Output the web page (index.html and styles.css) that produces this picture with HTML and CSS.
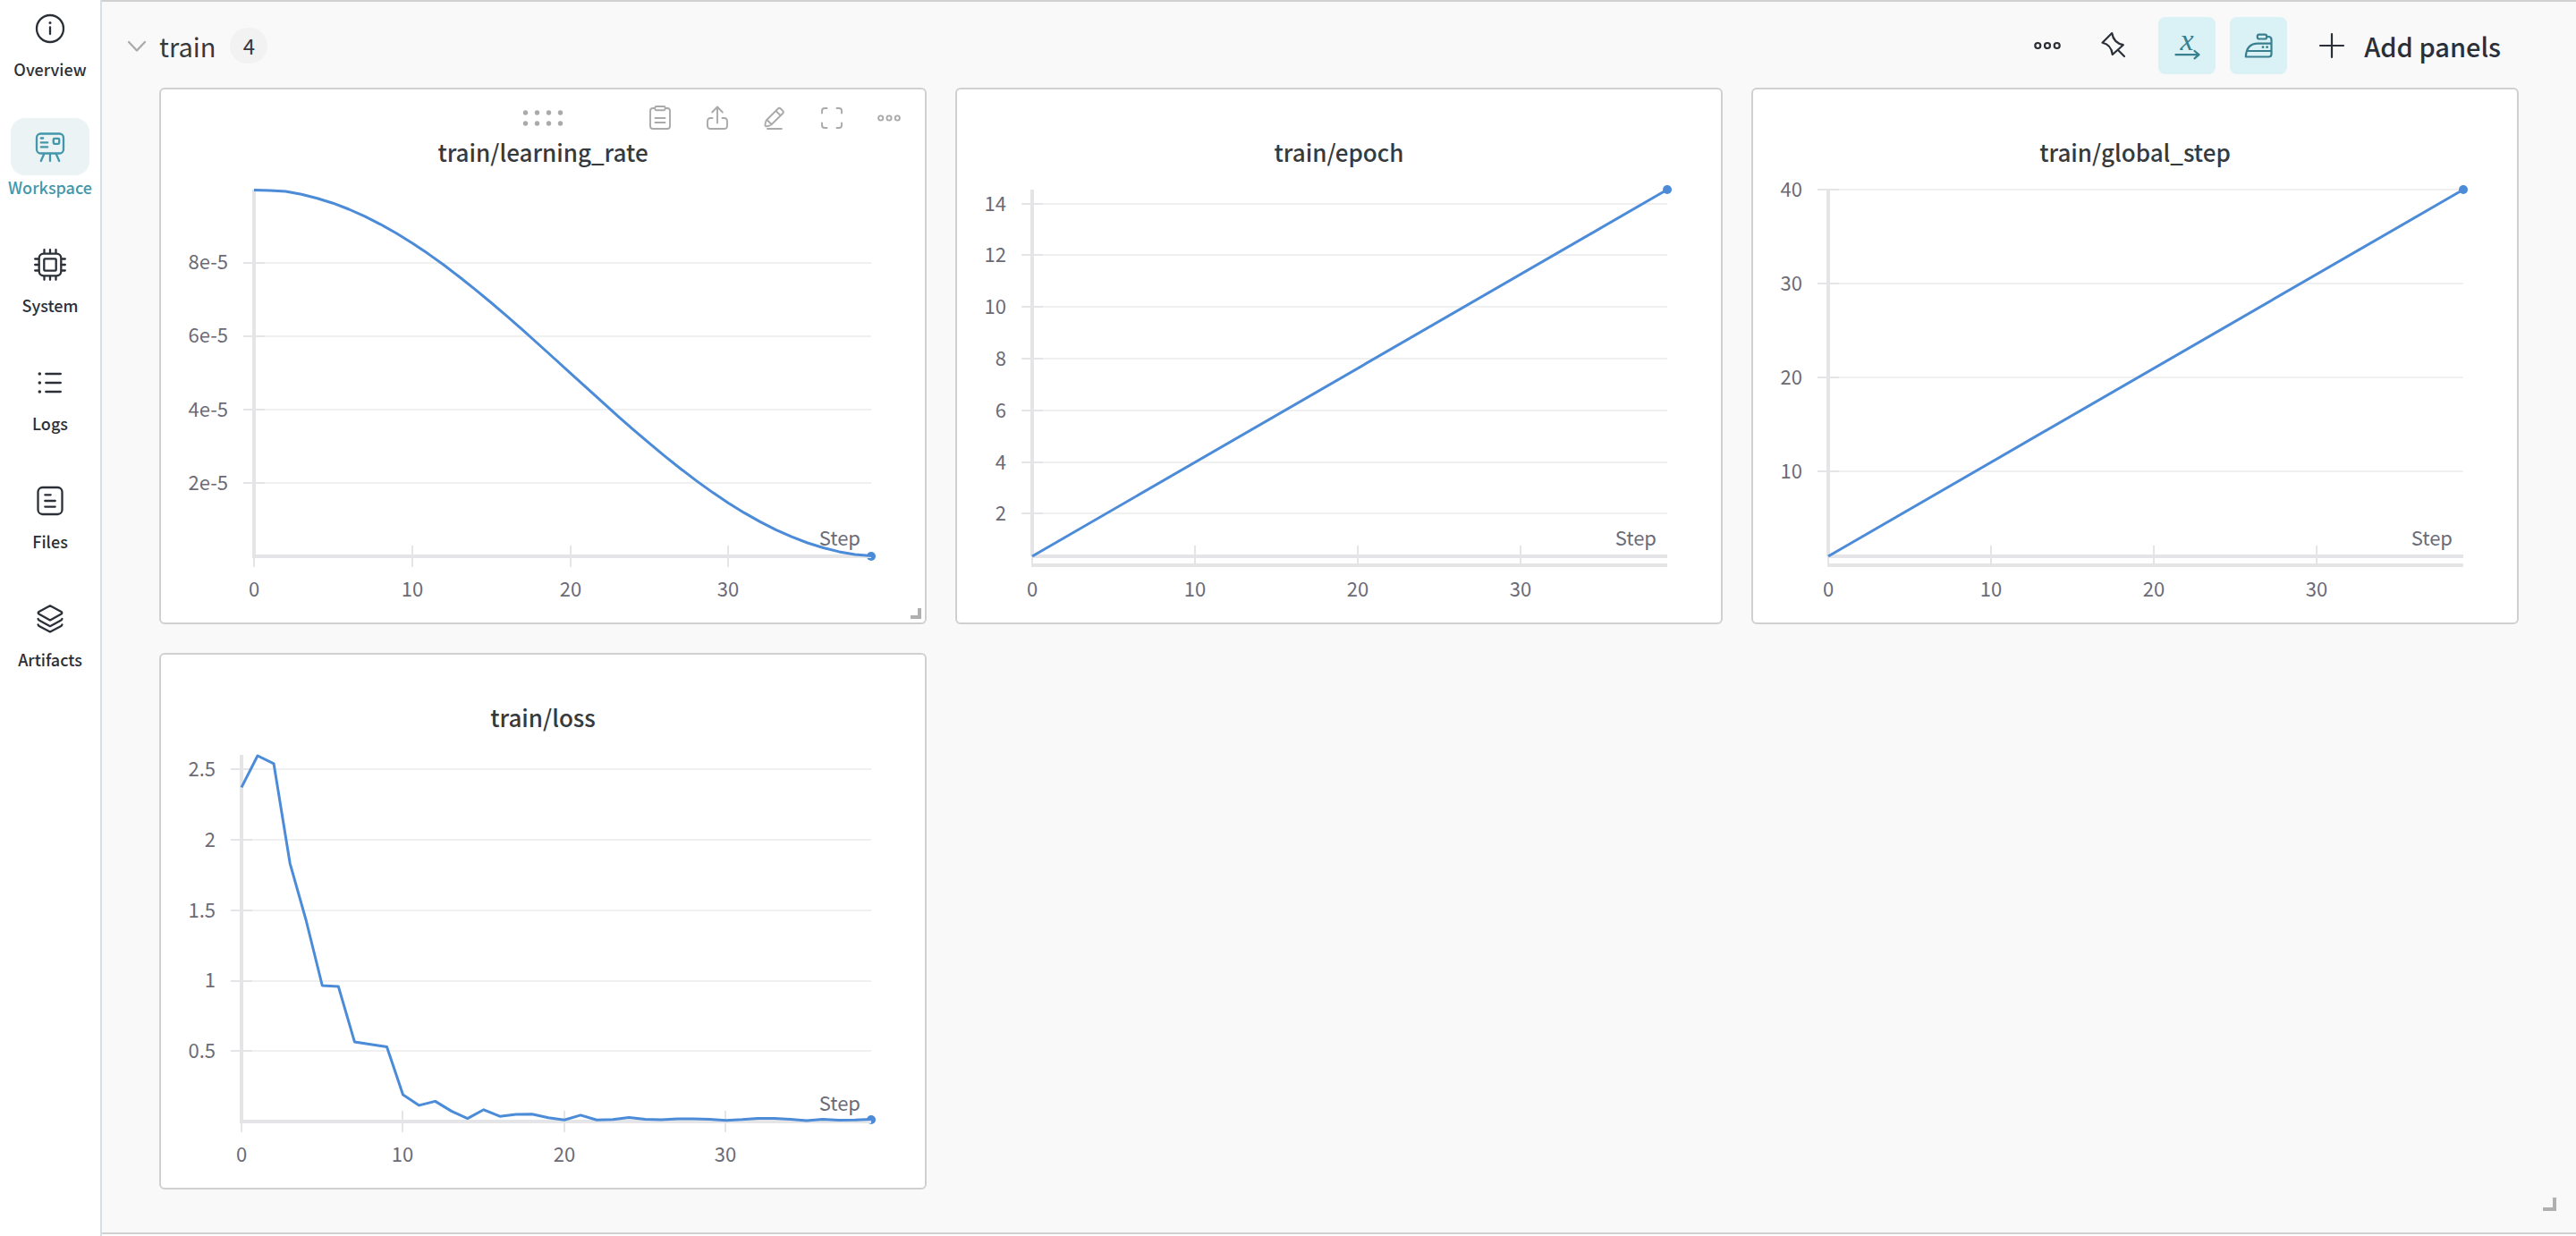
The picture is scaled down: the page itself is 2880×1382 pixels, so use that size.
FILE: index.html
```html
<!DOCTYPE html>
<html lang="en">
<head>
<meta charset="utf-8">
<title>Workspace</title>
<link rel="stylesheet" href="styles.css">
</head>
<body>
<div class="app">
  <nav class="sidebar">
    <a class="nav-item" href="#overview">
      <span class="nav-icon"><svg class="icon-nav" viewBox="0 0 36 36"><circle cx="18" cy="18" r="15"/><path d="M18 16.5V24"/><circle class="solid" cx="18" cy="11.5" r="1.5"/></svg></span>
      <span class="nav-label">Overview</span>
    </a>
    <a class="nav-item active" href="#workspace">
      <span class="nav-icon"><svg class="icon-nav" viewBox="0 0 36 36"><rect x="3" y="3.5" width="30" height="22" rx="4.5"/><path d="M7.8 8.5h2.4M7.8 13.4h7.4M7.8 18.4h7.4M11.3 26L7.8 34M18 26v8M24.7 26l3.5 8"/><rect x="21.8" y="8.8" width="6.4" height="6" rx="1"/></svg></span>
      <span class="nav-label">Workspace</span>
    </a>
    <a class="nav-item" href="#system">
      <span class="nav-icon"><svg class="icon-nav" viewBox="0 0 36 36"><rect x="5.7" y="5.7" width="24.6" height="24.6" rx="5"/><rect x="11.3" y="11.3" width="13.4" height="13.4" rx="1"/><path d="M11.5 1.2v4M18 1.2v4M24.5 1.2v4M11.5 30.8v4M18 30.8v4M24.5 30.8v4M1.2 11.5h4M1.2 18h4M1.2 24.5h4M30.8 11.5h4M30.8 18h4M30.8 24.5h4"/></svg></span>
      <span class="nav-label">System</span>
    </a>
    <a class="nav-item" href="#logs">
      <span class="nav-icon"><svg class="icon-nav" viewBox="0 0 36 36"><circle class="solid" cx="6.3" cy="8" r="1.8"/><circle class="solid" cx="6.3" cy="18" r="1.8"/><circle class="solid" cx="6.3" cy="28" r="1.8"/><path d="M13.3 8h16.5M13.3 18h16.5M13.3 28h16.5"/></svg></span>
      <span class="nav-label">Logs</span>
    </a>
    <a class="nav-item" href="#files">
      <span class="nav-icon"><svg class="icon-nav" viewBox="0 0 36 36"><rect x="4.5" y="3" width="27" height="30" rx="5"/><path d="M12.3 11.3h6.4M12.3 18h11.4M12.3 24.6h11.4"/></svg></span>
      <span class="nav-label">Files</span>
    </a>
    <a class="nav-item" href="#artifacts">
      <span class="nav-icon"><svg class="icon-nav" viewBox="0 0 36 36"><path d="M18 3.3L30.5 10q1.6 1.2 0 2.6L18 19.6 5.5 12.6q-1.6-1.3 0-2.6zM4.6 18q0 1 1.5 1.8L18 26.2l11.9-6.4Q31.4 19 31.4 18M4.6 24.5q0 1 1.5 1.8L18 32.6l11.9-6.3q1.5-.8 1.5-1.8"/></svg></span>
      <span class="nav-label">Artifacts</span>
    </a>
  </nav>

  <main class="main">
    <section class="section">
      <header class="section-header">
        <button class="section-toggle" type="button">
          <svg class="chevron" viewBox="0 0 24 24"><path d="M3 8l9 9.5L21 8"/></svg>
          <span class="section-title">train</span>
          <span class="badge">4</span>
        </button>
        <div class="section-actions">
          <div class="plain-actions">
            <button class="icon-button" type="button" aria-label="More"><svg class="icon-action" viewBox="0 0 40 40"><circle cx="9.3" cy="20" r="3"/><circle cx="20" cy="20" r="3"/><circle cx="30.7" cy="20" r="3"/></svg></button>
            <button class="icon-button" type="button" aria-label="Pin"><svg class="icon-action" viewBox="0 0 40 40"><path d="M16.2 6L5.5 16.8Q15.5 19 16.8 30L28.8 19.2Q18 17 16.2 6zM22.8 24.8L30 32"/></svg></button>
          </div>
          <div class="toggle-actions">
            <button class="icon-button on" type="button" aria-label="X axis"><svg class="icon-action" viewBox="0 0 40 40"><text class="axis-glyph" x="20" y="25">x</text><path d="M7.5 30.2H33M28.5 26l5 4.2-5 4.2"/></svg></button>
            <button class="icon-button on" type="button" aria-label="Smoothing"><svg class="icon-action" viewBox="0 0 40 40"><rect x="18.8" y="7.7" width="10.4" height="4.8" rx="2"/><path d="M29.2 10h1.8q3.5 0 3.5 3.5V29.5q0 3-3 3H5.8Q6.5 17.6 19.5 17.6H34.5M8 26H34.5"/><circle class="solid" cx="25" cy="21.7" r="1.4"/><circle class="solid" cx="29.6" cy="21.7" r="1.4"/></svg></button>
          </div>
          <button class="add-button" type="button">
            <svg class="icon-plus" viewBox="0 0 28 28"><path d="M14 1v26M1 14h26"/></svg>
            <span>Add panels</span>
          </button>
        </div>
      </header>

      <div class="panels">
        <article class="panel">
          <div class="panel-head">
            <div class="panel-tools">
              <svg class="drag" viewBox="0 0 48 20"><circle cx="4.5" cy="4" r="2.7"/><circle cx="17.5" cy="4" r="2.7"/><circle cx="30.5" cy="4" r="2.7"/><circle cx="43.5" cy="4" r="2.7"/><circle cx="4.5" cy="16" r="2.7"/><circle cx="17.5" cy="16" r="2.7"/><circle cx="30.5" cy="16" r="2.7"/><circle cx="43.5" cy="16" r="2.7"/></svg>
              <div class="tool-buttons">
                <button class="tool" type="button" aria-label="Copy"><svg class="icon-tool" viewBox="0 0 32 32"><path d="M10 5H8Q5 5 5 8V25q0 3 3 3H24q3 0 3-3V8q0-3-3-3H22M10.5 16h11M10.5 21h11"/><rect x="10.3" y="3" width="11.4" height="4.3" rx="1.5"/></svg></button>
                <button class="tool" type="button" aria-label="Share"><svg class="icon-tool" viewBox="0 0 32 32"><path d="M16 4V21.5M10.2 9.5L16 3.5l5.8 6M10.5 16H8.5Q5 16 5 19.5V24.5Q5 28 8.5 28H23.5Q27 28 27 24.5V19.5Q27 16 23.5 16H21.5"/></svg></button>
                <button class="tool" type="button" aria-label="Edit"><svg class="icon-tool" viewBox="0 0 32 32"><path d="M8 28H23.8M6.8 18.5L19.8 5.5Q21.3 4 22.8 5.5L25.2 7.9Q26.5 9.4 25.2 10.8L12.2 23.5Q10 25 7 25.2 5.3 25.3 5.4 23.5 5.8 20 6.8 18.5zM7.5 18l5 5M17.5 8l5.2 5.2"/></svg></button>
                <button class="tool" type="button" aria-label="Full screen"><svg class="icon-tool" viewBox="0 0 32 32"><path d="M5 10.5V8Q5 5 8 5h2.5M21.5 5H24q3 0 3 3v2.5M27 21.5V24q0 3-3 3H21.5M10.5 27H8q-3 0-3-3V21.5"/></svg></button>
                <button class="tool" type="button" aria-label="More"><svg class="icon-tool" viewBox="0 0 32 32"><circle cx="6.7" cy="16" r="2.6"/><circle cx="16" cy="16" r="2.6"/><circle cx="25.3" cy="16" r="2.6"/></svg></button>
              </div>
            </div>
            <h2 class="panel-title">train/learning_rate</h2>
          </div>
          <svg class="chart" viewBox="0 0 854 496">
            <path class="grid" d="M104 94H794M104 176H794M104 258H794M104 340H794"/>
            <path class="tick" d="M92 94h24M92 176h24M92 258h24M92 340h24M104 422v12M281 410v24M458 410v24M634 410v24"/>
            <circle class="dot" cx="794" cy="422" r="5"/>
            <path class="axis" d="M104 12V422M102 422H794"/>
            <polyline class="line" points="104,12.6 121.7,13 139.4,14.1 157,17.3 174.7,21.7 192.4,27.2 210.1,34 227.8,41.9 245.4,50.8 263.1,60.8 280.8,71.8 298.5,83.6 316.2,96.3 333.8,109.7 351.5,123.8 369.2,138.5 386.9,153.6 404.6,169.1 422.2,185 439.9,201 457.6,217.1 475.3,233.2 493,249.2 510.6,265.1 528.3,280.6 546,295.7 563.7,310.4 581.4,324.5 599,337.9 616.7,350.6 634.4,362.4 652.1,373.4 669.8,383.4 687.4,392.3 705.1,400.2 722.8,407 740.5,412.5 758.2,416.9 775.8,420.1 794,421.5"/>
            <g class="y-labels"><text x="75" y="101">8e-5</text><text x="75" y="183">6e-5</text><text x="75" y="266">4e-5</text><text x="75" y="348">2e-5</text><text x="782" y="410">Step</text></g>
            <g class="x-labels"><text x="104" y="467">0</text><text x="281" y="467">10</text><text x="458" y="467">20</text><text x="634" y="467">30</text></g>
          </svg>
          <span class="resize"></span>
        </article>

        <article class="panel">
          <div class="panel-head"><h2 class="panel-title">train/epoch</h2></div>
          <svg class="chart" viewBox="0 0 854 496">
            <path class="grid" d="M84 28H794M84 85H794M84 143H794M84 201H794M84 259H794M84 317H794M84 374H794"/>
            <path class="tick" d="M72 28h24M72 85h24M72 143h24M72 201h24M72 259h24M72 317h24M72 374h24M84 422v10M266 410v22M448 410v22M630 410v22"/>
            <circle class="dot" cx="794" cy="12" r="5"/>
            <path class="axis" d="M84 12V422M84 422H794M83 432H794"/>
            <path class="line" d="M84 422L794 12"/>
            <g class="y-labels"><text x="55" y="36">14</text><text x="55" y="93">12</text><text x="55" y="151">10</text><text x="55" y="209">8</text><text x="55" y="267">6</text><text x="55" y="325">4</text><text x="55" y="382">2</text><text x="782" y="410">Step</text></g>
            <g class="x-labels"><text x="84" y="467">0</text><text x="266" y="467">10</text><text x="448" y="467">20</text><text x="630" y="467">30</text></g>
          </svg>
        </article>

        <article class="panel">
          <div class="panel-head"><h2 class="panel-title">train/global_step</h2></div>
          <svg class="chart" viewBox="0 0 854 496">
            <path class="grid" d="M84 12H794M84 117H794M84 222H794M84 327H794"/>
            <path class="tick" d="M72 12h24M72 117h24M72 222h24M72 327h24M84 422v10M266 410v22M448 410v22M630 410v22"/>
            <circle class="dot" cx="794" cy="12" r="5"/>
            <path class="axis" d="M84 12V422M84 422H794M83 432H794"/>
            <path class="line" d="M84 422L794 12"/>
            <g class="y-labels"><text x="55" y="20">40</text><text x="55" y="125">30</text><text x="55" y="230">20</text><text x="55" y="335">10</text><text x="782" y="410">Step</text></g>
            <g class="x-labels"><text x="84" y="467">0</text><text x="266" y="467">10</text><text x="448" y="467">20</text><text x="630" y="467">30</text></g>
          </svg>
        </article>

        <article class="panel">
          <div class="panel-head"><h2 class="panel-title">train/loss</h2></div>
          <svg class="chart" viewBox="0 0 854 496">
            <path class="grid" d="M90 28H794M90 107H794M90 186H794M90 265H794M90 343H794"/>
            <path class="tick" d="M78 28h24M78 107h24M78 186h24M78 265h24M78 343h24M90 422v12M270 410v24M451 410v24M631 410v24"/>
            <circle class="dot" cx="794" cy="420" r="5"/>
            <path class="axis" d="M90 12V422M88 422H794"/>
            <polyline class="line" points="90,48.4 108,13 126.1,21.9 144.2,133.3 162.2,197 180.3,270 198.3,270.9 216.4,332.9 234.4,335.8 252.5,338.6 270.5,392.1 288.6,403.9 306.6,399.4 324.7,410.4 342.7,418.6 360.8,408.8 378.8,416.2 396.9,414.1 414.9,413.7 433,417.8 451,420.2 469.1,414.9 487.1,420.2 505.2,419.8 523.2,417.4 541.3,419.4 559.3,420 577.4,419 595.4,419 613.5,419.4 631.5,420.7 649.6,419.8 667.6,418.4 685.7,418.6 703.7,419.6 721.8,420.9 739.8,419.6 757.9,420.4 775.9,420.2 794,419.4"/>
            <g class="y-labels"><text x="61" y="36">2.5</text><text x="61" y="115">2</text><text x="61" y="194">1.5</text><text x="61" y="272">1</text><text x="61" y="351">0.5</text><text x="782" y="410">Step</text></g>
            <g class="x-labels"><text x="90" y="467">0</text><text x="270" y="467">10</text><text x="451" y="467">20</text><text x="631" y="467">30</text></g>
          </svg>
        </article>
      </div>
      <span class="resize resize-section"></span>
    </section>
  </main>
</div>
</body>
</html>
```
FILE: styles.css
```css
* {
  box-sizing: border-box;
}

body {
  margin: 0;
  background: #fff;
  color: #2b3038;
  font-family: "Noto Sans CJK SC", "Noto Sans", sans-serif;
}

button {
  margin: 0;
  padding: 0;
  border: 0;
  background: none;
  color: inherit;
  font: inherit;
}

svg {
  display: block;
  overflow: visible;
  fill: none;
  stroke: currentColor;
  stroke-linecap: round;
  stroke-linejoin: round;
}

.solid {
  fill: currentColor;
  stroke: none;
}

.app {
  display: flex;
  min-height: 100vh;
}

/* Sidebar */
.sidebar {
  display: flex;
  flex-direction: column;
  flex: none;
  width: 114px;
  border-right: 2px solid #d8dee3;
}

.nav-item {
  display: flex;
  flex-direction: column;
  align-items: center;
  height: 132px;
  color: #2b3038;
  text-decoration: none;
}

.nav-icon {
  display: flex;
  align-items: center;
  justify-content: center;
  width: 88px;
  height: 64px;
  border-radius: 16px;
}

.icon-nav {
  width: 36px;
  height: 36px;
  stroke-width: 2.3;
}

.nav-label {
  font-size: 18px;
  font-weight: 500;
  line-height: 26px;
}

.nav-item.active {
  color: #4397aa;
}

.nav-item.active .nav-icon {
  background: #ebf3f5;
}

/* Section */
.main {
  flex: 1;
  min-width: 0;
}

.section {
  position: relative;
  padding: 0 64px 48px;
  border-top: 2px solid #d0d0d0;
  border-bottom: 2px solid #d0d0d0;
  background: #f9f9f9;
}

.section-header {
  display: flex;
  align-items: center;
  justify-content: space-between;
  height: 96px;
  padding-top: 2px;
  margin-left: -37px;
}

.section-toggle {
  display: flex;
  align-items: center;
}

.chevron {
  width: 24px;
  height: 24px;
  margin-right: 13px;
  color: #aaa;
  stroke-width: 2.3;
}

.section-title {
  margin-right: 16px;
  color: #363a3d;
  font-size: 29px;
  line-height: 40px;
}

.badge {
  width: 42px;
  border-radius: 20px;
  background: #f2f2f2;
  color: #363a3d;
  font-size: 24px;
  line-height: 40px;
  text-align: center;
}

.section-actions,
.plain-actions,
.toggle-actions {
  display: flex;
  align-items: center;
}

.section-actions,
.toggle-actions {
  gap: 16px;
}

.plain-actions {
  gap: 12px;
}

.icon-button {
  display: flex;
  align-items: center;
  justify-content: center;
  width: 64px;
  height: 64px;
  border-radius: 8px;
}

.icon-button.on {
  background: #daf1f5;
  color: #38808f;
}

.icon-action {
  width: 40px;
  height: 40px;
  stroke-width: 2.2;
}

.axis-glyph {
  fill: currentColor;
  stroke: none;
  font-family: "Liberation Serif", serif;
  font-size: 34px;
  font-style: italic;
  text-anchor: middle;
}

.add-button {
  display: flex;
  align-items: center;
  gap: 22px;
  padding: 0 20px;
  font-size: 29px;
  font-weight: 500;
  line-height: 64px;
}

.icon-plus {
  width: 28px;
  height: 28px;
  stroke-width: 2.2;
}

/* Panels */
.panels {
  display: grid;
  grid-template-columns: repeat(3, minmax(0, 1fr));
  gap: 32px;
}

.panel {
  position: relative;
  border: 2px solid #d0d0d0;
  border-radius: 6px;
  background: #fff;
}

.panel-head {
  display: flex;
  flex-direction: column;
  justify-content: flex-end;
  height: 100px;
  padding-bottom: 12px;
}

.panel-title {
  margin: 0;
  color: #363a3d;
  font-size: 26px;
  font-weight: 500;
  line-height: 36px;
  text-align: center;
}

.panel-tools {
  display: grid;
  grid-template-columns: 1fr auto 1fr;
  align-items: center;
  height: 52px;
  padding-top: 12px;
  color: #aaa;
}

.drag {
  grid-column: 2;
  width: 48px;
  height: 20px;
  fill: currentColor;
  stroke: none;
}

.tool-buttons {
  display: flex;
  justify-content: flex-end;
  padding-right: 8px;
}

.tool {
  display: flex;
  align-items: center;
  justify-content: center;
  width: 64px;
  height: 40px;
}

.icon-tool {
  width: 32px;
  height: 32px;
  stroke-width: 1.9;
}

.resize {
  position: absolute;
  right: 4px;
  bottom: 4px;
  width: 12px;
  height: 12px;
  border-right: 4px solid #b0b0b0;
  border-bottom: 4px solid #b0b0b0;
}

.resize-section {
  right: 22px;
  bottom: 24px;
  width: 15px;
  height: 15px;
}

/* Charts */
.chart {
  width: 100%;
  stroke-linecap: butt;
}

.grid {
  stroke: #f0f0f1;
  stroke-width: 2;
}

.tick {
  stroke: #e5e5e7;
  stroke-width: 2;
}

.axis {
  stroke: #e5e5e7;
  stroke-width: 4;
}

.line {
  stroke: #4b8bd8;
  stroke-width: 3;
}

.dot {
  fill: #4b8bd8;
  stroke: none;
}

.chart text {
  fill: #6b6b76;
  stroke: none;
  font-size: 22px;
}

.y-labels {
  text-anchor: end;
}

.x-labels {
  text-anchor: middle;
}
```
